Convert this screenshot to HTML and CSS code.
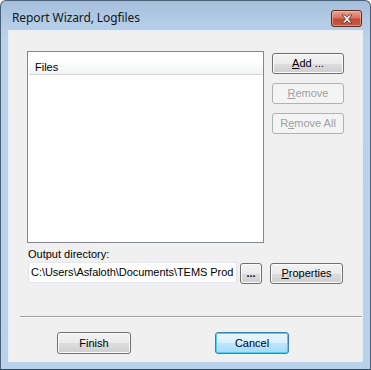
FILE: index.html
```html
<!DOCTYPE html>
<html>
<head>
<meta charset="utf-8">
<link rel="stylesheet" href="styles.css">
</head>
<body>
<div class="window">
  <div class="titlebar">
    <span class="title">Report Wizard, Logfiles</span>
    <span class="close">
      <svg width="16" height="10" viewBox="0 0 16 10"><path d="M3 1 L6 1 L8 3.3 L10 1 L13 1 L9.5 5 L13 9 L10 9 L8 6.7 L6 9 L3 9 L6.5 5 Z" fill="#fff" stroke="#5a2a22" stroke-width="0.8" stroke-linejoin="round"/></svg>
    </span>
  </div>
  <div class="client">
    <div class="top">
      <div class="listbox">
        <div class="header"><span>Files</span></div>
      </div>
      <div class="side">
        <button class="btn"><u>A</u>dd ...</button>
        <button class="btn disabled"><u>R</u>emove</button>
        <button class="btn disabled">R<u>e</u>move All</button>
      </div>
    </div>
    <div class="label">Output directory:</div>
    <div class="outrow">
      <div class="textbox"><span class="path">C:\Users\Asfaloth\Documents\TEMS Prod</span></div>
      <button class="btn dots">...</button>
      <button class="btn props"><u>P</u>roperties</button>
    </div>
    <div class="sep"></div>
    <div class="bottom">
      <button class="btn wide">Finish</button>
      <button class="btn wide focus">Cancel</button>
    </div>
  </div>
</div>
</body>
</html>
```
FILE: styles.css
```css
html, body {
  margin: 0;
  padding: 0;
  background: #ffffff;
}
.window {
  width: 371px;
  height: 370px;
  box-sizing: border-box;
  border: 1px solid #4a5f78;
  border-bottom-color: #2a4a5a;
  border-radius: 6px 6px 0 0;
  background: linear-gradient(#a4bedb 0px, #b3cbe5 20px, #bad2ea 40px, #b9d1ea 100%);
  display: flex;
  flex-direction: column;
  overflow: hidden;
}
.titlebar {
  height: 29px;
  flex: none;
  display: flex;
  align-items: flex-start;
  justify-content: space-between;
  padding: 0 8px 0 11px;
}
.title {
  font-family: "Noto Sans", "Open Sans", sans-serif;
  font-size: 12px;
  color: #101820;
  margin-top: 10px;
  line-height: 14px;
  letter-spacing: -0.1px;
}
.close {
  margin-top: 9px;
  width: 31px;
  height: 17px;
  box-sizing: border-box;
  border: 1px solid #5e2a24;
  border-radius: 3px;
  background: linear-gradient(#e6a596 0%, #d8735f 45%, #c24a35 55%, #c85a42 100%);
  display: flex;
  align-items: center;
  justify-content: center;
  box-shadow: inset 0 0 0 1px rgba(255,200,190,0.5);
}
.close svg { display: block; }
.client {
  margin: 0 7px 7px 7px;
  flex: 1;
  background: #f0f0f0;
  border: 1px solid #e6eef7;
  box-sizing: border-box;
  font-family: "Liberation Sans", Arial, sans-serif;
  font-size: 11px;
  color: #000;
  padding: 20px 0 0 18px;
  display: flex;
  flex-direction: column;
}
.top {
  display: flex;
  gap: 8px;
}
.listbox {
  width: 237px;
  height: 192px;
  box-sizing: border-box;
  border: 1px solid #828790;
  background: #fff;
  padding-top: 9px;
}
.header {
  height: 14px;
  box-sizing: border-box;
  background: linear-gradient(#ffffff, #f2f3f5);
  border-bottom: 1px solid #d5d5d5;
  padding-left: 6px;
  line-height: 12px;
  margin-left: 1px;
}
.side {
  display: flex;
  flex-direction: column;
  gap: 9px;
  padding-top: 2px;
}
.btn {
  font-family: "Liberation Sans", Arial, sans-serif;
  font-size: 11px;
  color: #000;
  width: 72px;
  height: 21px;
  box-sizing: border-box;
  border: 1px solid #707070;
  border-radius: 3px;
  background: linear-gradient(#f2f2f2 0%, #ebebeb 50%, #dddddd 51%, #cfcfcf 100%);
  box-shadow: inset 0 0 0 1px #fcfcfc;
  padding: 0;
  margin: 0;
  line-height: 17px;
  text-align: center;
  flex: none;
}
.btn.disabled {
  color: #a0a0a0;
  border-color: #adb2b5;
  background: #f4f4f4;
  box-shadow: none;
}
.label {
  margin-top: 4px;
  height: 14px;
  line-height: 14px;
  padding-left: 1px;
}
.outrow {
  display: flex;
  align-items: flex-start;
  margin-top: 1px;
  padding-left: 1px;
}
.textbox {
  width: 209px;
  height: 21px;
  flex: none;
  box-sizing: border-box;
  border: 1px solid #abadb3;
  border-top-color: #e3e9ef;
  border-left-color: #e2e3ea;
  border-right-color: #dbdfe6;
  border-bottom-color: #e3e9ef;
  background: #fff;
  white-space: nowrap;
  overflow: hidden;
  padding: 0 0 0 2px;
  line-height: 19px;
}
.path {
  letter-spacing: -0.05px;
}
.btn.dots {
  width: 22px;
  margin-left: 3px;
  margin-top: 1px;
  font-weight: bold;
  line-height: 15px;
}
.btn.props {
  width: 73px;
  margin-left: 8px;
  margin-top: 1px;
}
.sep {
  margin-top: 32px;
  margin-left: -7px;
  height: 1px;
  background: #a0a0a0;
  border-bottom: 1px solid #ffffff;
}
.bottom {
  display: flex;
  margin-top: 14px;
  padding-left: 30px;
  gap: 84px;
}
.btn.wide {
  width: 74px;
  height: 22px;
  line-height: 18px;
}
.btn.focus {
  border-color: #3c7fb1;
  background: linear-gradient(#eaf6fd 0%, #d9f0fc 50%, #bee6fd 51%, #a7d9f5 100%);
  box-shadow: inset 0 0 0 1px #48d0f7;
}
u { text-decoration: underline; text-underline-offset: 1px; }
```
